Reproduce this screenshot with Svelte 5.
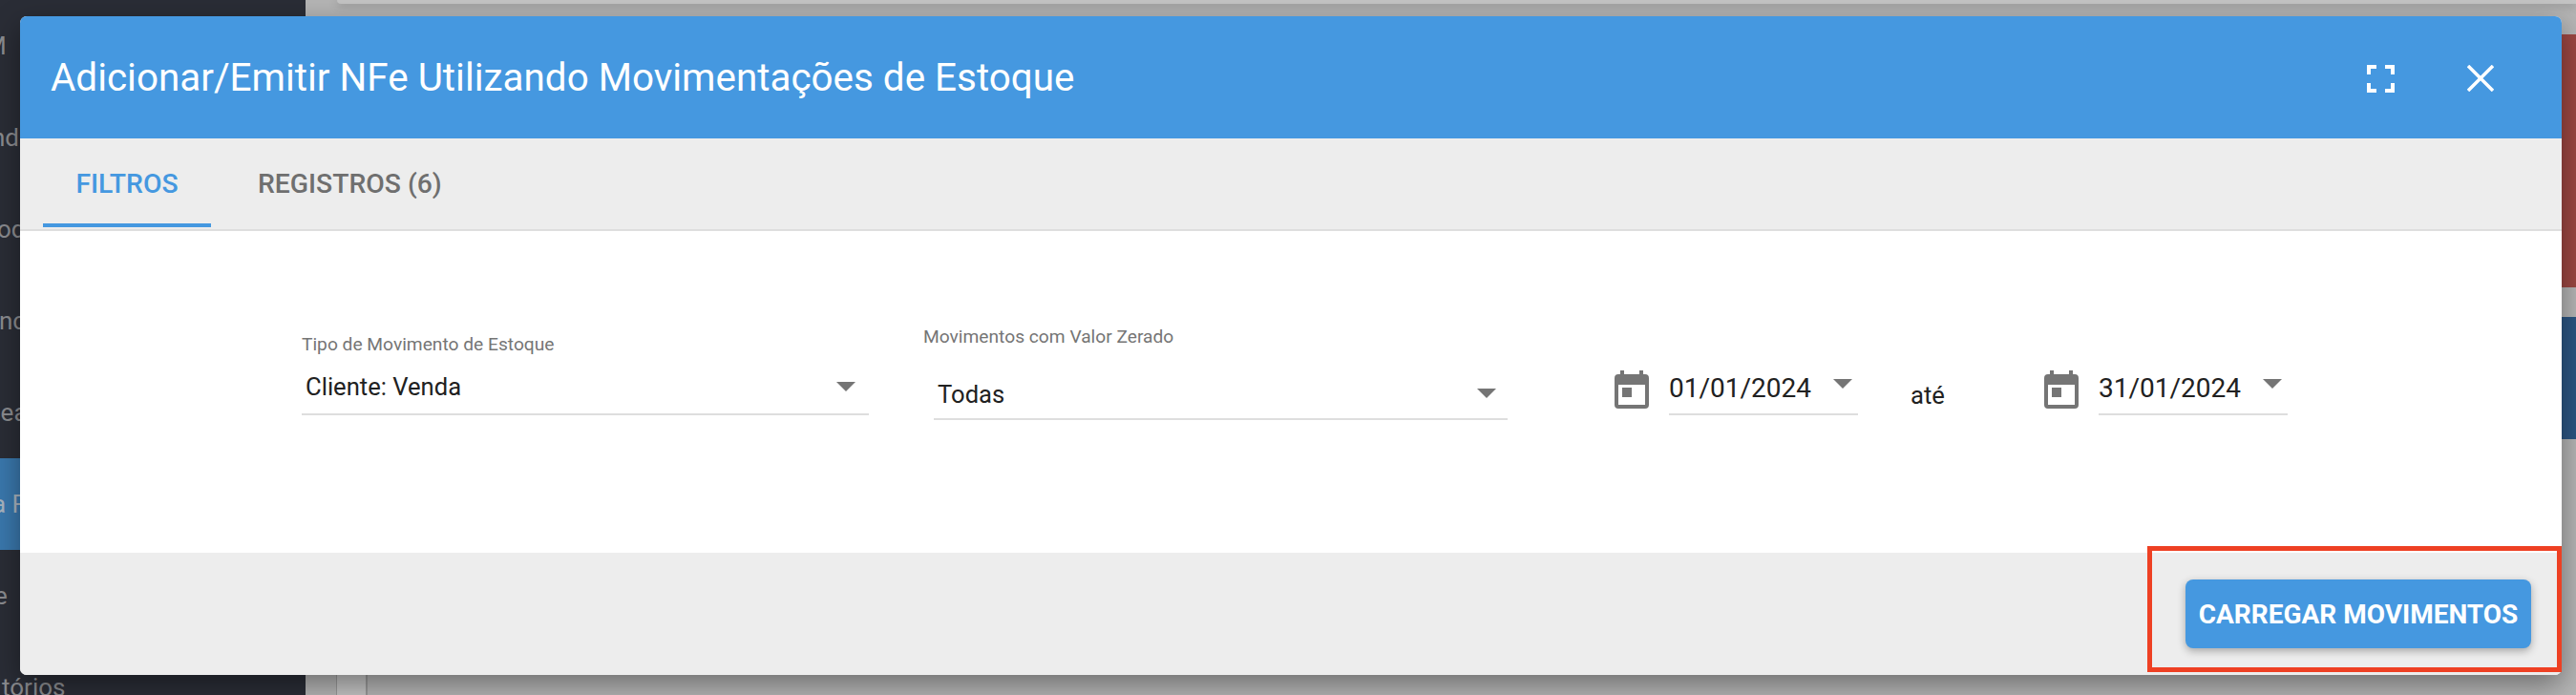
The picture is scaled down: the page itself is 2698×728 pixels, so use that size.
<script>
	// what is left visible of the menu behind the modal
	const navItems = [
		{ label: 'M', x: -16 },
		{ label: 'ndi', x: -9 },
		{ label: 'oqu', x: -3 },
		{ label: 'nc', x: -1 },
		{ label: 'pea', x: -14 },
		{ label: 'a F', x: -8, active: true },
		{ label: 'e', x: -6 },
		{ label: 'tórios', x: 2 }
	];
</script>

<div class="page">
	<aside class="sidebar">
		{#each navItems as item}
			<div class="nav-item" class:active={item.active}>
				<span style="margin-left: {item.x}px">{item.label}</span>
			</div>
		{/each}
	</aside>

	<main class="backdrop">
		<div class="card-top"></div>
		<div class="rows">
			<div class="gap-col"></div>
			<div class="gap-col"></div>
		</div>
		<div class="strip red"></div>
		<div class="strip blue"></div>
	</main>

	<section class="modal">
		<header class="head">
			<h2>Adicionar/Emitir NFe Utilizando Movimentações de Estoque</h2>
			<div class="head-actions">
				<svg width="29" height="29" viewBox="0 0 29 29" fill="#fff" aria-hidden="true">
					<path d="M0 0h10v4H4v6H0zM19 0h10v10h-4V4h-6zM0 19h4v6h6v4H0zM25 19h4v10H19v-4h6z" />
				</svg>
				<svg width="28" height="28" viewBox="0 0 28 28" aria-hidden="true">
					<path d="M1 1l26 26M27 1L1 27" stroke="#fff" stroke-width="3.5" fill="none" />
				</svg>
			</div>
		</header>

		<nav class="tabs">
			<button class="tab selected">FILTROS</button>
			<button class="tab">REGISTROS (6)</button>
		</nav>

		<div class="filters">
			<div class="field tipo">
				<span class="label">Tipo de Movimento de Estoque</span>
				<div class="control">
					<span>Cliente: Venda</span>
					<i class="caret"></i>
				</div>
			</div>

			<div class="field zerado">
				<span class="label">Movimentos com Valor Zerado</span>
				<div class="control">
					<span>Todas</span>
					<i class="caret"></i>
				</div>
			</div>

			<div class="dates">
				<div class="date">
					<svg width="36" height="40" viewBox="0 0 36 40" fill="#757575" aria-hidden="true">
						<path d="M6 0h4v4h16V0h4v4h2a4 4 0 0 1 4 4v28a4 4 0 0 1-4 4H4a4 4 0 0 1-4-4V8a4 4 0 0 1 4-4h2zM4 15v21h28V15z" fill-rule="evenodd" />
						<rect x="8" y="18" width="10" height="10" />
					</svg>
					<div class="date-input">
						<span>01/01/2024</span>
						<i class="caret"></i>
					</div>
				</div>
				<span class="until">até</span>
				<div class="date">
					<svg width="36" height="40" viewBox="0 0 36 40" fill="#757575" aria-hidden="true">
						<path d="M6 0h4v4h16V0h4v4h2a4 4 0 0 1 4 4v28a4 4 0 0 1-4 4H4a4 4 0 0 1-4-4V8a4 4 0 0 1 4-4h2zM4 15v21h28V15z" fill-rule="evenodd" />
						<rect x="8" y="18" width="10" height="10" />
					</svg>
					<div class="date-input">
						<span>31/01/2024</span>
						<i class="caret"></i>
					</div>
				</div>
			</div>
		</div>

		<footer class="foot">
			<div class="highlight">
				<button class="load">CARREGAR MOVIMENTOS</button>
			</div>
		</footer>
	</section>
</div>

<style>
	:global(body) {
		margin: 0;
		background: #b3b3b3;
	}

	.page {
		position: relative;
		display: flex;
		width: 2698px;
		height: 728px;
		overflow: hidden;
		font-family: Roboto, 'Liberation Sans', sans-serif;
	}

	.sidebar {
		flex: 0 0 320px;
		display: flex;
		flex-direction: column;
		background: #2a2d36;
		color: #8b8c90;
		font-size: 26px;
		white-space: nowrap;
	}

	.nav-item {
		flex: 0 0 96px;
		display: flex;
		align-items: center;
	}

	.nav-item.active {
		background: #3a78ad;
		color: #a9b4bf;
	}

	.backdrop {
		flex: 1;
		position: relative;
		background: #b5b5b5;
	}

	.card-top {
		position: absolute;
		left: 33px;
		right: 0;
		top: 0;
		height: 4px;
		background: #c4c4c4;
		border-bottom-left-radius: 8px;
		box-shadow: 0 2px 10px rgba(0, 0, 0, 0.25);
	}

	.rows {
		position: absolute;
		left: 32px;
		right: 0;
		bottom: 0;
		height: 21px;
		display: flex;
	}

	.gap-col {
		box-sizing: border-box;
		width: 33px;
		background: #c4c4c4;
		border-left: 1px solid #999;
		border-right: 2px solid #999;
	}

	.gap-col:last-child {
		flex: 1;
		background: #b5b5b5;
		border: 0;
	}

	.strip {
		position: absolute;
		right: 0;
		width: 15px;
	}

	.red {
		top: 36px;
		height: 265px;
		background: #9c4742;
	}

	.blue {
		top: 332px;
		height: 128px;
		background: #2c5683;
	}

	.modal {
		position: absolute;
		left: 21px;
		top: 17px;
		width: 2662px;
		height: 690px;
		display: flex;
		flex-direction: column;
		border-radius: 7px;
		background: #fff;
		box-shadow: 0 10px 30px rgba(0, 0, 0, 0.4);
	}

	.head {
		flex: 0 0 128px;
		display: flex;
		align-items: center;
		justify-content: space-between;
		padding: 2px 71px 0 32px;
		box-sizing: border-box;
		border-radius: 7px 7px 0 0;
		background: #4598e0;
		color: #fff;
	}

	h2 {
		margin: -2px 0 0;
		font-size: 40.4px;
		font-weight: 400;
	}

	.head-actions {
		display: flex;
		align-items: center;
		gap: 76px;
	}

	.tabs {
		flex: 0 0 97px;
		box-sizing: border-box;
		display: flex;
		padding-left: 24px;
		background: #ededed;
		border-bottom: 2px solid #dedede;
	}

	.tab {
		position: relative;
		padding: 0 34px;
		border: 0;
		background: none;
		font: 500 28.3px Roboto, sans-serif;
		color: #6f6f6f;
	}

	.tab.selected {
		color: #4598e0;
		width: 176px;
		padding: 0;
		margin-right: 15px;
	}

	.tab.selected::after {
		content: '';
		position: absolute;
		left: 0;
		right: 0;
		bottom: 2px;
		height: 4px;
		background: #4598e0;
	}

	.filters {
		flex: 1;
		position: relative;
		color: #212121;
		font-size: 25.6px;
	}

	.field {
		position: absolute;
	}

	.tipo {
		left: 295px;
		top: 107px;
		width: 594px;
	}

	.zerado {
		left: 946px;
		top: 99px;
		width: 612px;
	}

	.label {
		display: block;
		font-size: 19.2px;
		line-height: 24px;
		color: #757575;
	}

	.control {
		box-sizing: border-box;
		display: flex;
		align-items: center;
		justify-content: space-between;
		height: 56px;
		margin-top: 6px;
		padding: 0 14px 2px 4px;
		border-bottom: 2px solid #dedede;
	}

	.zerado .control {
		height: 50px;
		margin: 25px 0 0 11px;
		padding: 0 12px 2px 4px;
	}

	.zerado .caret {
		margin-top: -2px;
	}

	.caret {
		width: 0;
		height: 0;
		border-left: 10px solid transparent;
		border-right: 10px solid transparent;
		border-top: 10px solid #757575;
	}

	.dates {
		position: absolute;
		left: 1670px;
		top: 146px;
		display: flex;
		align-items: flex-start;
	}

	.date {
		display: flex;
		gap: 21px;
	}

	.date-input {
		box-sizing: border-box;
		display: flex;
		justify-content: space-between;
		width: 198px;
		height: 47px;
		padding: 2px 6px 0 0;
		border-bottom: 2px solid #dedede;
		font-size: 28px;
		line-height: 34px;
	}

	.date-input .caret {
		margin-top: 7px;
	}

	.until {
		box-sizing: border-box;
		width: 195px;
		padding: 9px 0 0 55px;
		line-height: 34px;
	}

	.foot {
		flex: 0 0 128px;
		position: relative;
		border-radius: 0 0 7px 7px;
		background: #ededed;
	}

	.highlight {
		position: absolute;
		right: 0;
		top: -7px;
		width: 434px;
		height: 132px;
		box-sizing: border-box;
		border: 5px solid #ee4023;
		display: flex;
		align-items: flex-start;
		justify-content: flex-end;
		padding: 30px 27px 0 0;
	}

	.load {
		width: 362px;
		height: 72px;
		border: 0;
		border-radius: 8px;
		background: #4598e0;
		color: #fff;
		font: 700 28px Roboto, sans-serif;
		box-shadow: 0 3px 8px rgba(0, 0, 0, 0.3);
	}
</style>
